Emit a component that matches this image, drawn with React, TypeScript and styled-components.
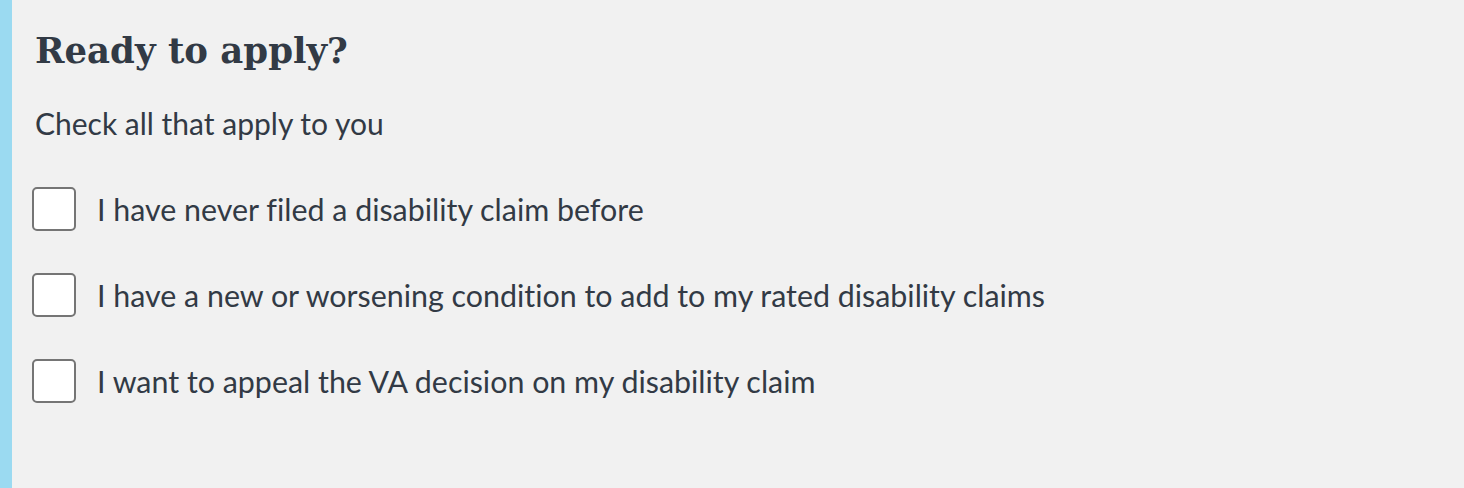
import React from "react";
import styled, { createGlobalStyle } from "styled-components";

const Global = createGlobalStyle`
  html, body { margin: 0; padding: 0; background: #f1f1f1; }
  body {
    font-family: Lato, "Noto Sans", sans-serif;
    color: #323a45;
    font-variant-ligatures: none;
  }
`;

const Panel = styled.section`
  box-sizing: border-box;
  min-height: 100vh;
  border-left: 12px solid #9bdaf1;
  background: #f1f1f1;
  padding: 27px 0 0 23px;
`;

const Heading = styled.h2`
  margin: 0;
  font-family: "DejaVu Serif", "Liberation Serif", serif;
  font-weight: 700;
  font-size: 35.5px;
  line-height: 48px;
  color: #323a45;
`;

const Intro = styled.p`
  margin: 28px 0 0;
  font-size: 30px;
  line-height: 40px;
  color: #323a45;
`;

const List = styled.div`
  display: flex;
  flex-direction: column;
  gap: 42px;
  margin-top: 44px;
`;

const Row = styled.label`
  display: flex;
  align-items: center;
  gap: 21px;
  font-size: 30.4px;
  line-height: 44px;
  color: #323a45;
  cursor: pointer;
`;

const Box = styled.span`
  box-sizing: border-box;
  flex: none;
  width: 44px;
  height: 44px;
  border: 2px solid #757575;
  border-radius: 5px;
  background: #fff;
  margin-left: -3px;
`;

const options = [
  "I have never filed a disability claim before",
  "I have a new or worsening condition to add to my rated disability claims",
  "I want to appeal the VA decision on my disability claim",
];

export default function App() {
  return (
    <>
      <Global />
      <Panel>
        <Heading>Ready to apply?</Heading>
        <Intro>Check all that apply to you</Intro>
        <List>
          {options.map((o) => (
            <Row key={o}>
              <Box />
              <span>{o}</span>
            </Row>
          ))}
        </List>
      </Panel>
    </>
  );
}
